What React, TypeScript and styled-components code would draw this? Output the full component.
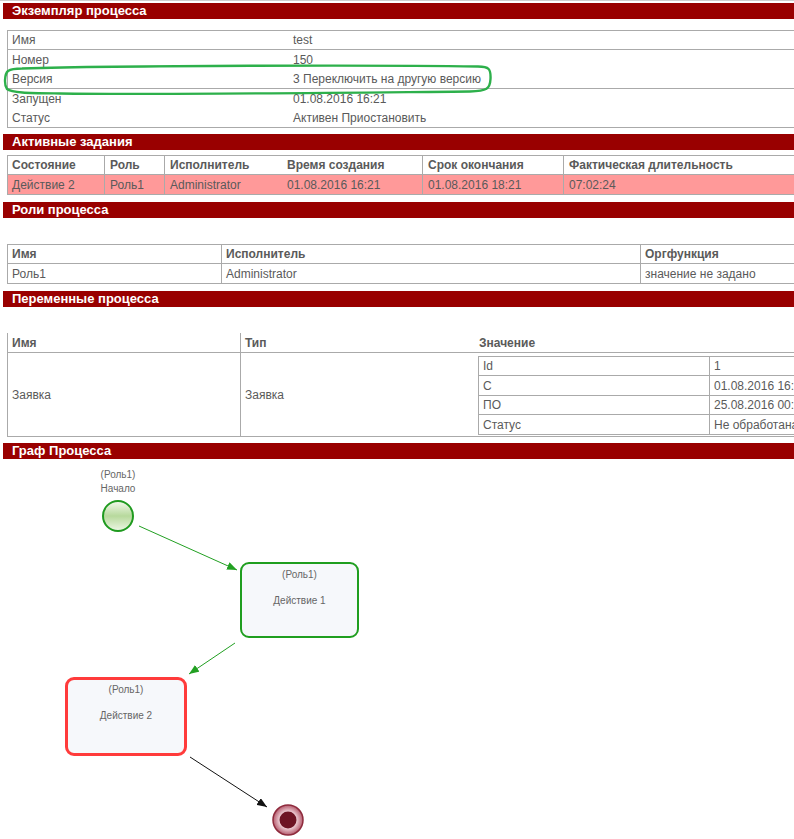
import styled, { createGlobalStyle } from "styled-components";

const GlobalStyle = createGlobalStyle`
  *, *::before, *::after { box-sizing: border-box; }
  html, body { margin: 0; padding: 0; background: #fff; overflow: hidden; }
  body {
    font-family: "Liberation Sans", Arial, sans-serif;
    font-size: 12px;
    color: #5a5a5a;
  }
`;

const Page = styled.div`
  position: relative;
  width: 1000px;
  border-top: 1px solid #cfcfcf;
  padding-top: 2px;
`;

const SectionBar = styled.div<{ $gap?: number }>`
  margin: ${({ $gap }) => $gap ?? 0}px 0 0 3px;
  height: 16px;
  line-height: 16px;
  padding-left: 9px;
  background: #990000;
  color: #fff;
  font-size: 13px;
  font-weight: bold;
`;

const DataTable = styled.div<{ $gap: number; $noTop?: boolean }>`
  margin: ${({ $gap }) => $gap}px 0 0 7px;
  border-left: 1px solid #aaa;
  border-top: ${({ $noTop }) => ($noTop ? "none" : "1px solid #aaa")};
`;

const Row = styled.div<{ $cols: string; $h: number; $line?: boolean; $bg?: string; $head?: boolean }>`
  display: grid;
  grid-template-columns: ${({ $cols }) => $cols};
  height: ${({ $h }) => $h}px;
  border-bottom: ${({ $line }) => ($line ? "1px solid #aaa" : "none")};
  background: ${({ $bg }) => $bg ?? "transparent"};
  font-weight: ${({ $head }) => ($head ? "bold" : "normal")};
`;

const Cell = styled.div<{ $sep?: boolean; $pad?: number }>`
  display: flex;
  align-items: center;
  padding-left: ${({ $pad }) => $pad ?? 4}px;
  border-left: ${({ $sep }) => ($sep ? "1px solid #aaa" : "none")};
  white-space: nowrap;
  overflow: hidden;
`;

const NestedCell = styled.div`
  border-left: 1px solid #aaa;
  padding: 3px 0 2px 0;
  border-left: none;
`;

const NestedTable = styled.div`
  border-left: 1px solid #aaa;
  border-top: 1px solid #aaa;
`;

const Highlight = styled.svg`
  position: absolute;
  left: 0;
  top: 0;
  width: 794px;
  height: 130px;
  pointer-events: none;
`;

const Canvas = styled.div`
  position: relative;
  height: 380px;
  font-size: 10px;
`;

const CanvasArt = styled.svg`
  position: absolute;
  left: 0;
  top: 0;
  width: 794px;
  height: 380px;
`;

const NodeLabel = styled.div<{ $x: number; $y: number }>`
  position: absolute;
  left: ${({ $x }) => $x - 40}px;
  top: ${({ $y }) => $y}px;
  width: 80px;
  text-align: center;
  line-height: 14px;
  color: #666;
`;

const TaskBox = styled.div<{ $x: number; $y: number; $w: number; $h: number; $color: string; $bw: number }>`
  position: absolute;
  left: ${({ $x }) => $x}px;
  top: ${({ $y }) => $y}px;
  width: ${({ $w }) => $w}px;
  height: ${({ $h }) => $h}px;
  border: ${({ $bw }) => $bw}px solid ${({ $color }) => $color};
  border-radius: 9px;
  background: #f6f8fb;
  color: #666;
  text-align: center;
  display: flex;
  flex-direction: column;
  align-items: center;
`;

const TaskRole = styled.div<{ $top: number }>`
  margin-top: ${({ $top }) => $top}px;
  line-height: 12px;
`;

const TaskName = styled.div`
  margin-top: 14px;
  line-height: 12px;
`;

const top = 459;

function ProcessGraph() {
  return (
    <Canvas>
      <CanvasArt viewBox={`0 ${top} 794 380`}>
        <defs>
          <marker id="ag" markerWidth="10" markerHeight="8" refX="10" refY="4" orient="auto" markerUnits="userSpaceOnUse">
            <path d="M0 0 L10 4 L0 8 Z" fill="#22a022" />
          </marker>
          <marker id="ak" markerWidth="10" markerHeight="8" refX="10" refY="4" orient="auto" markerUnits="userSpaceOnUse">
            <path d="M0 0 L10 4 L0 8 Z" fill="#111" />
          </marker>
          <linearGradient id="startFill" x1="0" y1="0" x2="0" y2="1">
            <stop offset="0" stopColor="#f4faef" />
            <stop offset="0.5" stopColor="#b7d99c" />
            <stop offset="1" stopColor="#eef7e6" />
          </linearGradient>
          <radialGradient id="endFill" cx="0.5" cy="0.5" r="0.5">
            <stop offset="0.5" stopColor="#f6dde3" />
            <stop offset="1" stopColor="#b45a6c" />
          </radialGradient>
        </defs>
        <circle cx="118" cy="516" r="15" fill="url(#startFill)" stroke="#1f9a1f" strokeWidth="2" />
        <line x1="139" y1="526" x2="237" y2="570" stroke="#22a022" strokeWidth="1" markerEnd="url(#ag)" />
        <line x1="235" y1="643" x2="189" y2="674" stroke="#22a022" strokeWidth="1" markerEnd="url(#ag)" />
        <line x1="190" y1="757" x2="267" y2="807" stroke="#111" strokeWidth="1" markerEnd="url(#ak)" />
        <circle cx="288" cy="820" r="15" fill="url(#endFill)" stroke="#8e2a3c" strokeWidth="1.5" />
        <circle cx="288" cy="820" r="8.5" fill="#6e1424" />
      </CanvasArt>

      <NodeLabel $x={118} $y={468 - top}>
        (Роль1)
        <br />
        Начало
      </NodeLabel>

      <TaskBox $x={240} $y={562 - top} $w={119} $h={76} $color="#1f9e1f" $bw={2}>
        <TaskRole $top={5}>(Роль1)</TaskRole>
        <TaskName>Действие 1</TaskName>
      </TaskBox>

      <TaskBox $x={65} $y={677 - top} $w={122} $h={79} $color="#ff3b3b" $bw={3}>
        <TaskRole $top={4}>(Роль1)</TaskRole>
        <TaskName>Действие 2</TaskName>
      </TaskBox>
    </Canvas>
  );
}

export default function App() {
  const infoCols = "280px 1fr";
  const taskCols = "96px 60px 117px 141px 141px 1fr";
  const roleCols = "213px 419px 1fr";
  const varCols = "232px 238px 1fr";
  const nestCols = "230px 1fr";

  return (
    <>
      <GlobalStyle />
      <Page>
        <SectionBar>Экземпляр процесса</SectionBar>
        <DataTable $gap={11}>
          <Row $cols={infoCols} $h={19} $line>
            <Cell>Имя</Cell>
            <Cell $pad={5}>test</Cell>
          </Row>
          <Row $cols={infoCols} $h={19}>
            <Cell>Номер</Cell>
            <Cell $pad={5}>150</Cell>
          </Row>
          <Row $cols={infoCols} $h={20} $line>
            <Cell>Версия</Cell>
            <Cell $pad={5}>3 Переключить на другую версию</Cell>
          </Row>
          <Row $cols={infoCols} $h={19}>
            <Cell>Запущен</Cell>
            <Cell $pad={5}>01.08.2016 16:21</Cell>
          </Row>
          <Row $cols={infoCols} $h={20} $line>
            <Cell>Статус</Cell>
            <Cell $pad={5}>Активен Приостановить</Cell>
          </Row>
        </DataTable>

        <SectionBar $gap={6}>Активные задания</SectionBar>
        <DataTable $gap={5}>
          <Row $cols={taskCols} $h={19} $line $head>
            <Cell>Состояние</Cell>
            <Cell $sep $pad={5}>Роль</Cell>
            <Cell $sep $pad={5}>Исполнитель</Cell>
            <Cell $pad={6}>Время создания</Cell>
            <Cell $sep $pad={5}>Срок окончания</Cell>
            <Cell $sep $pad={5}>Фактическая длительность</Cell>
          </Row>
          <Row $cols={taskCols} $h={20} $line $bg="#ff9999">
            <Cell>Действие 2</Cell>
            <Cell $sep $pad={5}>Роль1</Cell>
            <Cell $sep $pad={5}>Administrator</Cell>
            <Cell $pad={6}>01.08.2016 16:21</Cell>
            <Cell $sep $pad={5}>01.08.2016 18:21</Cell>
            <Cell $sep $pad={5}>07:02:24</Cell>
          </Row>
        </DataTable>

        <SectionBar $gap={7}>Роли процесса</SectionBar>
        <DataTable $gap={26}>
          <Row $cols={roleCols} $h={19} $line $head>
            <Cell>Имя</Cell>
            <Cell $sep $pad={4}>Исполнитель</Cell>
            <Cell $sep $pad={4}>Оргфункция</Cell>
          </Row>
          <Row $cols={roleCols} $h={20} $line>
            <Cell>Роль1</Cell>
            <Cell $sep $pad={4}>Administrator</Cell>
            <Cell $sep $pad={4}>значение не задано</Cell>
          </Row>
        </DataTable>

        <SectionBar $gap={7}>Переменные процесса</SectionBar>
        <DataTable $gap={26} $noTop>
          <Row $cols={varCols} $h={20} $line $head>
            <Cell>Имя</Cell>
            <Cell $sep $pad={4}>Тип</Cell>
            <Cell $pad={1}>Значение</Cell>
          </Row>
          <Row $cols={varCols} $h={84} $line>
            <Cell>Заявка</Cell>
            <Cell $sep $pad={4}>Заявка</Cell>
            <NestedCell>
              <NestedTable>
                <Row $cols={nestCols} $h={19} $line>
                  <Cell>Id</Cell>
                  <Cell $sep>1</Cell>
                </Row>
                <Row $cols={nestCols} $h={20} $line>
                  <Cell>С</Cell>
                  <Cell $sep>01.08.2016 16:21</Cell>
                </Row>
                <Row $cols={nestCols} $h={19} $line>
                  <Cell>ПО</Cell>
                  <Cell $sep>25.08.2016 00:00</Cell>
                </Row>
                <Row $cols={nestCols} $h={20} $line>
                  <Cell>Статус</Cell>
                  <Cell $sep>Не обработана</Cell>
                </Row>
              </NestedTable>
            </NestedCell>
          </Row>
        </DataTable>

        <SectionBar $gap={6}>Граф Процесса</SectionBar>
        <ProcessGraph />

        <Highlight viewBox="0 0 794 130">
          <path
            d="M22 67.5 C120 64.5 380 64 478 65.5 C489 65.5 491 68 490.5 78 C490 88 487 90 470 90.5 C360 91.5 160 94 60 92.5 C30 92 12 92 7 88 C4 84 4.5 73 8 70 C11 68 16 67.5 22 67.5 Z"
            fill="none"
            stroke="#2db04b"
            strokeWidth="2.4"
          />
        </Highlight>
      </Page>
    </>
  );
}
